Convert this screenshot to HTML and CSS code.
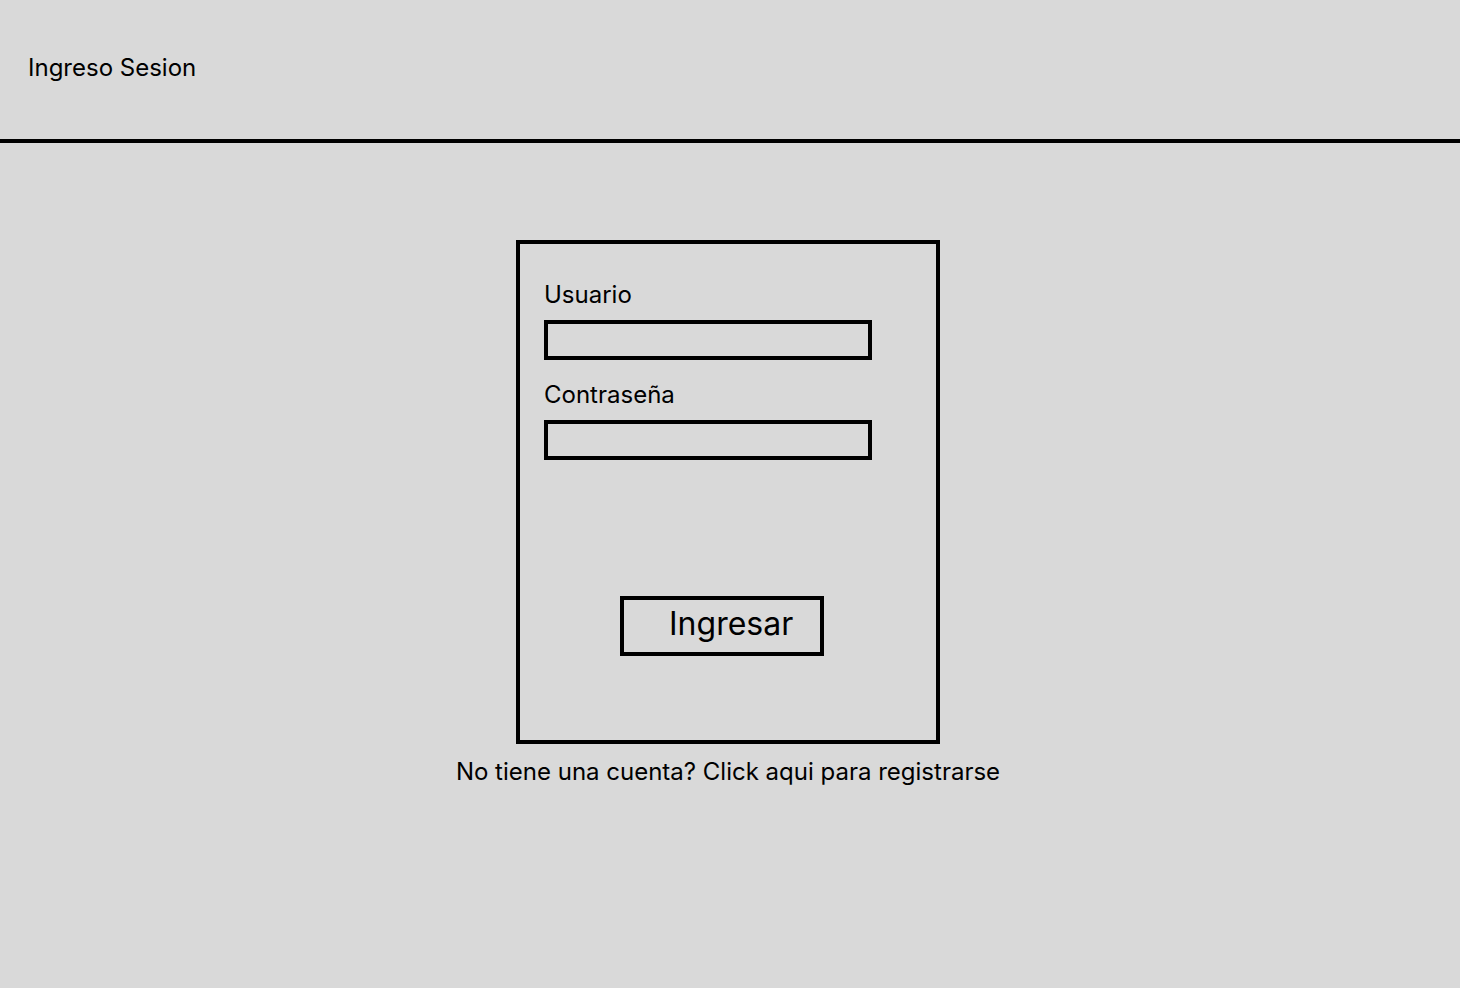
FILE: index.html
```html
<!DOCTYPE html>
<html lang="es">
<head>
<meta charset="utf-8">
<title>Ingreso Sesion</title>
<link rel="stylesheet" href="styles.css">
</head>
<body>
<header class="topbar">
  <h1 class="topbar-title">Ingreso Sesion</h1>
</header>
<main class="content">
  <form class="login-card">
    <label class="field-label" for="usuario">Usuario</label>
    <input class="field-input" id="usuario" type="text">
    <label class="field-label field-label--second" for="clave">Contraseña</label>
    <input class="field-input" id="clave" type="password">
    <button class="submit-btn" type="button">Ingresar</button>
  </form>
  <p class="register-text">No tiene una cuenta? Click aqui para registrarse</p>
</main>
</body>
</html>
```
FILE: styles.css
```css
html, body {
  margin: 0;
  padding: 0;
}
body {
  background: #d9d9d9;
  color: #000;
  font-family: Inter, "Noto Sans", sans-serif;
  font-size: 24px;
  line-height: 29px;
  width: 1460px;
  height: 988px;
  overflow: hidden;
}
.topbar {
  height: 143px;
  box-sizing: border-box;
  padding: 53px 0 0 28px;
  border-bottom: 4px solid #000;
}
.topbar-title {
  margin: 0;
  font-size: 24px;
  font-weight: 400;
  line-height: 29px;
}
.content {
  display: flex;
  flex-direction: column;
  align-items: center;
  padding: 97px 4px 0 0;
}
.login-card {
  width: 424px;
  height: 504px;
  box-sizing: border-box;
  border: 4px solid #000;
  padding: 36px 24px 0 24px;
  display: flex;
  flex-direction: column;
  align-items: flex-start;
}
.field-label {
  display: block;
  line-height: 29px;
  height: 29px;
}
.field-label--second {
  margin-top: 20px;
}
.field-input {
  margin: 11px 0 0 0;
  width: 328px;
  height: 40px;
  box-sizing: border-box;
  border: 4px solid #000;
  background: transparent;
  padding: 0;
  outline: none;
  font: inherit;
  border-radius: 0;
}
.submit-btn {
  margin: 136px 0 0 76px;
  width: 204px;
  height: 60px;
  box-sizing: border-box;
  border: 4px solid #000;
  background: transparent;
  padding: 4px 0 0 45px;
  text-align: left;
  font-family: Inter, "Noto Sans", sans-serif;
  font-size: 32px;
  line-height: 39px;
  color: #000;
  border-radius: 0;
  display: flex;
  align-items: flex-start;
}
.register-text {
  margin: 13px 0 0 0;
  line-height: 29px;
}
```
